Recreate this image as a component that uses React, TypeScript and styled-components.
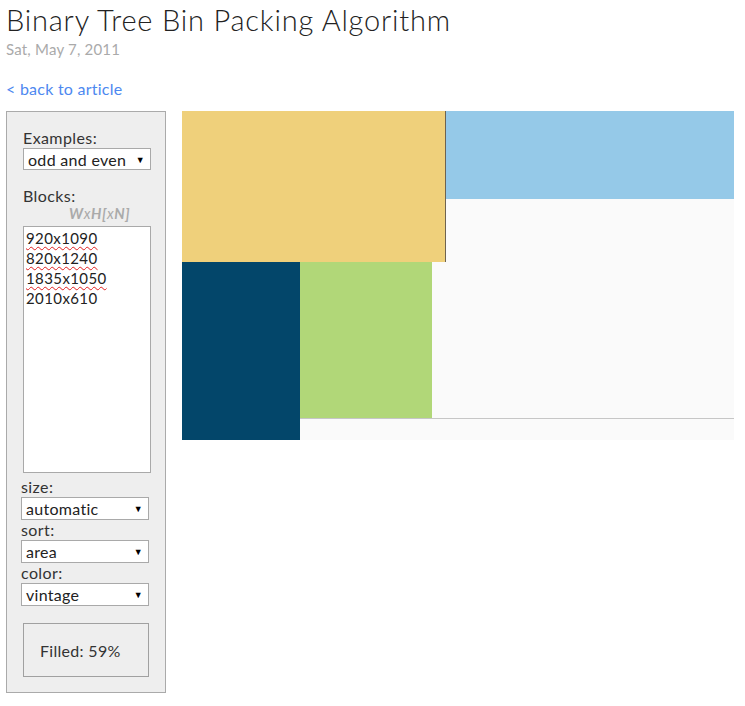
import React from 'react';
import styled, { createGlobalStyle } from 'styled-components';

const GlobalStyle = createGlobalStyle`
  html, body {
    margin: 0;
    padding: 0;
    background: #fff;
  }
  body {
    font-family: Lato, "Open Sans", sans-serif;
    color: #333;
  }
`;

const Page = styled.div`
  padding: 0 0 0 6px;
`;

const Title = styled.h1`
  margin: 0;
  padding-top: 3px;
  font-size: 29px;
  line-height: 34px;
  font-weight: 300;
  letter-spacing: 0.8px;
  color: #222;
`;

const DateLine = styled.div`
  font-size: 15px;
  line-height: 20px;
  letter-spacing: 0.2px;
  color: #aaa;
  margin-top: 2px;
`;

const BackLink = styled.a`
  display: block;
  margin-top: 20px;
  font-size: 16px;
  line-height: 20px;
  letter-spacing: 0.25px;
  color: #4d88f0;
  text-decoration: none;
`;

const Main = styled.div`
  display: flex;
  align-items: flex-start;
  gap: 16px;
  margin-top: 12px;
`;

const Panel = styled.div`
  box-sizing: border-box;
  width: 160px;
  height: 582px;
  border: 1px solid #aaa;
  background: #eee;
  padding: 15px 0 0 0;
  display: flex;
  flex-direction: column;
`;

const Label = styled.div<{ $indent: number; $top?: number }>`
  margin-left: ${({ $indent }) => $indent}px;
  margin-top: ${({ $top }) => $top ?? 0}px;
  font-size: 16px;
  line-height: 21px;
  letter-spacing: 0.4px;
  color: #333;
`;

const SelectBox = styled.div<{ $indent: number; $h?: number }>`
  box-sizing: border-box;
  margin-left: ${({ $indent }) => $indent}px;
  width: 128px;
  height: ${({ $h }) => $h ?? 22}px;
  border: 1px solid #a9a9a9;
  background: #fff;
  display: flex;
  align-items: center;
  justify-content: space-between;
  padding: 0 5px 0 4px;
  font-size: 16px;
  letter-spacing: 0.3px;
  color: #222;
`;

const Arrow = styled.span`
  font-size: 9px;
  color: #000;
`;

const Hint = styled.div`
  margin-left: 62px;
  font-size: 14.5px;
  line-height: 16px;
  font-weight: 700;
  font-style: italic;
  color: #aaa;
  letter-spacing: 0.6px;
`;

const Small = styled.span`
  font-weight: 400;
`;

const BlockList = styled.div`
  box-sizing: border-box;
  margin: 4px 0 0 16px;
  width: 128px;
  height: 247px;
  border: 1px solid #a9a9a9;
  background: #fff;
  padding: 1px 0 0 2px;
  font-size: 15px;
  line-height: 20px;
  letter-spacing: 0.4px;
  color: #222;
`;

const BlockLine = styled.div<{ $misspelled?: boolean }>`
  span {
    text-decoration: ${({ $misspelled }) => ($misspelled ? 'underline wavy #e02020' : 'none')};
    text-decoration-thickness: 1px;
    text-underline-offset: 2px;
  }
`;

const Filled = styled.div`
  box-sizing: border-box;
  margin: 17px 0 0 16px;
  width: 126px;
  height: 54px;
  border: 1px solid #a0a0a0;
  padding-left: 16px;
  display: flex;
  align-items: center;
  font-size: 16px;
  letter-spacing: 0.3px;
  color: #333;
`;

const Canvas = styled.div`
  position: relative;
  width: 552px;
  height: 329px;
  background: #fafafa;
`;

const Block = styled.div<{ $x: number; $y: number; $w: number; $h: number; $c: string }>`
  position: absolute;
  left: ${({ $x }) => $x}px;
  top: ${({ $y }) => $y}px;
  width: ${({ $w }) => $w}px;
  height: ${({ $h }) => $h}px;
  background: ${({ $c }) => $c};
`;

const blocks = [
  { x: 0, y: 0, w: 263, h: 151, c: '#efd07b' },
  { x: 263, y: 0, w: 1, h: 151, c: '#6e6350' },
  { x: 264, y: 0, w: 288, h: 88, c: '#95c9e8' },
  { x: 0, y: 151, w: 118, h: 178, c: '#03466a' },
  { x: 118, y: 151, w: 132, h: 156, c: '#b1d778' },
  { x: 118, y: 307, w: 434, h: 1, c: '#c6c6c6' },
];

const lines = [
  { text: '920x1090', bad: true },
  { text: '820x1240', bad: true },
  { text: '1835x1050', bad: true },
  { text: '2010x610', bad: false },
];

export default function App() {
  return (
    <Page>
      <GlobalStyle />
      <Title>Binary Tree Bin Packing Algorithm</Title>
      <DateLine>Sat, May 7, 2011</DateLine>
      <BackLink href="#">&lt; back to article</BackLink>
      <Main>
        <Panel>
          <Label $indent={16}>Examples:</Label>
          <SelectBox $indent={16}>
            odd and even <Arrow>▼</Arrow>
          </SelectBox>
          <Label $indent={16} $top={15}>Blocks:</Label>
          <Hint>
            W<Small>x</Small>H[<Small>x</Small>N]
          </Hint>
          <BlockList>
            {lines.map((l) => (
              <BlockLine key={l.text} $misspelled={l.bad}>
                <span>{l.text}</span>
              </BlockLine>
            ))}
          </BlockList>
          <Label $indent={14} $top={3}>size:</Label>
          <SelectBox $indent={14} $h={23}>
            automatic <Arrow>▼</Arrow>
          </SelectBox>
          <Label $indent={14} $top={-1}>sort:</Label>
          <SelectBox $indent={14} $h={23}>
            area <Arrow>▼</Arrow>
          </SelectBox>
          <Label $indent={14} $top={-1}>color:</Label>
          <SelectBox $indent={14} $h={23}>
            vintage <Arrow>▼</Arrow>
          </SelectBox>
          <Filled>Filled: 59%</Filled>
        </Panel>
        <Canvas>
          {blocks.map((b, i) => (
            <Block key={i} $x={b.x} $y={b.y} $w={b.w} $h={b.h} $c={b.c} />
          ))}
        </Canvas>
      </Main>
    </Page>
  );
}
